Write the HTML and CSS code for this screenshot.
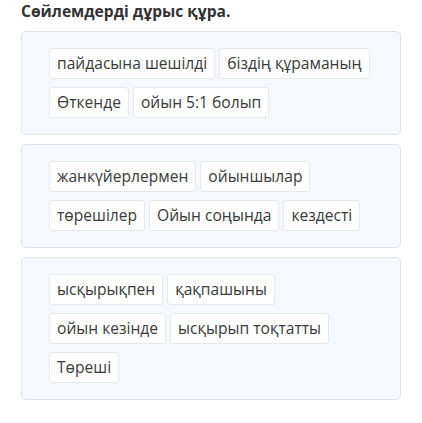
FILE: index.html
```html
<!DOCTYPE html>
<html lang="kk">
<head>
    <meta charset="UTF-8">
    <meta name="viewport" content="width=device-width, initial-scale=1.0">
    <title>Сөйлемдерді дұрыс құра</title>
    <link rel="stylesheet" href="styles.css">
</head>
<body>
    <h1 class="tapsyrma">Сөйлемдерді дұрыс құра.</h1>

    <div class="soilem">
        <span class="soz">пайдасына шешілді</span>
        <span class="soz">біздің құраманың</span>
        <span class="soz">Өткенде</span>
        <span class="soz">ойын 5:1 болып</span>
    </div>

    <div class="soilem">
        <span class="soz">жанкүйерлермен</span>
        <span class="soz">ойыншылар</span>
        <span class="soz">төрешілер</span>
        <span class="soz">Ойын соңында</span>
        <span class="soz">кездесті</span>
    </div>

    <div class="soilem">
        <span class="soz">ысқырықпен</span>
        <span class="soz">қақпашыны</span>
        <span class="soz">ойын кезінде</span>
        <span class="soz">ысқырып тоқтатты</span>
        <span class="soz">Төреші</span>
    </div>
</body>
</html>
```

FILE: styles.css
```css
body {
    font-family: "Open Sans", "Noto Sans", sans-serif;
    background-color: #fff;
    color: #333;
    margin: 0;
    padding: 0 21px;
}

.tapsyrma {
    font-size: 15.6px;
    font-weight: bold;
    line-height: 22px;
    margin: 0 0 9px 0;
    color: #333;
}

.soilem {
    display: flex;
    flex-wrap: wrap;
    gap: 8px 4px;
    background: #f5f8fc;
    border: 1px solid #dfe3e8;
    border-radius: 5px;
    padding: 16px 20px 16px 27px;
    margin-bottom: 9px;
}

.soz {
    background: #fff;
    border: 1px solid #e6e9ec;
    border-radius: 3px;
    padding: 4px 7px;
    font-size: 15.6px;
    line-height: 21px;
    color: #3a3a3a;
}
```
